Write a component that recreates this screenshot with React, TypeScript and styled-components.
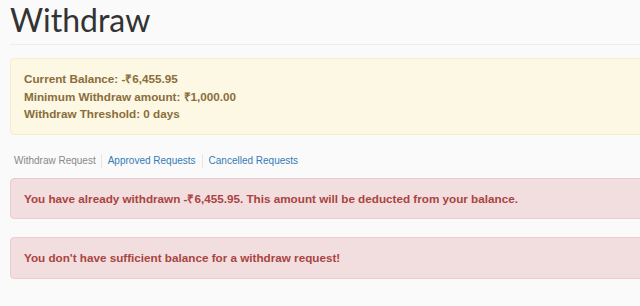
import React from "react";
import styled, { createGlobalStyle } from "styled-components";

const Global = createGlobalStyle`
  html, body { margin: 0; padding: 0; background: #fafafa; overflow: hidden; }
  body { font-family: "Liberation Sans", Arial, sans-serif; }
`;

const Page = styled.div`
  width: 680px;
  padding: 0 0 0 10px;
  box-sizing: border-box;
`;

const Heading = styled.h1`
  margin: 0;
  padding: 0 0 5px 0;
  font-family: Lato, "Open Sans", sans-serif;
  font-weight: 400;
  font-size: 32px;
  line-height: 39px;
  color: #333;
  border-bottom: 1px solid #eeeeee;
`;

const Alert = styled.div<{ $kind: "warning" | "danger" }>`
  box-sizing: border-box;
  border-radius: 4px;
  border: 1px solid ${(p) => (p.$kind === "warning" ? "#faebcc" : "#ebccd1")};
  background: ${(p) => (p.$kind === "warning" ? "#fcf8e3" : "#f2dede")};
  color: ${(p) => (p.$kind === "warning" ? "#8a6d3b" : "#a94442")};
  font-weight: 700;
  font-size: 11.7px;
  line-height: 17.5px;
  padding: 11px 13px;
`;

const Info = styled(Alert)`
  margin-top: 13px;
`;

const Line = styled.div``;

const Tabs = styled.nav`
  display: flex;
  align-items: center;
  font-size: 10px;
  line-height: 14px;
  margin: 19px 0 10px 4px;
`;

const Tab = styled.a<{ $active?: boolean }>`
  color: ${(p) => (p.$active ? "#888" : "#337ab7")};
  text-decoration: none;
  padding: 0 6px;
  border-left: 1px solid #e5e5e5;
  &:first-child { padding-left: 0; padding-right: 5px; border-left: none; }
`;

const Stack = styled.div`
  display: flex;
  flex-direction: column;
  gap: 18px;
`;

export default function App() {
  return (
    <>
      <Global />
      <Page>
        <Heading>Withdraw</Heading>
        <Info $kind="warning">
          <Line>Current Balance: -₹6,455.95</Line>
          <Line>Minimum Withdraw amount: ₹1,000.00</Line>
          <Line>Withdraw Threshold: 0 days</Line>
        </Info>
        <Tabs>
          <Tab $active>Withdraw Request</Tab>
          <Tab href="#">Approved Requests</Tab>
          <Tab href="#">Cancelled Requests</Tab>
        </Tabs>
        <Stack>
          <Alert $kind="danger">
            You have already withdrawn -₹6,455.95. This amount will be deducted from your balance.
          </Alert>
          <Alert $kind="danger">You don't have sufficient balance for a withdraw request!</Alert>
        </Stack>
      </Page>
    </>
  );
}
